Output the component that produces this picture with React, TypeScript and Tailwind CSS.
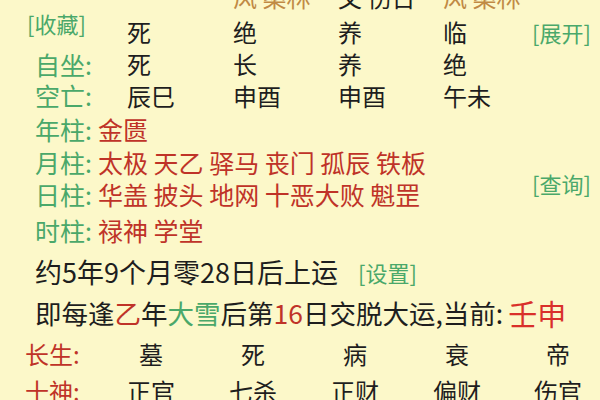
import React from "react";

const green = "text-[#4aa86a]";
const red = "text-[#bf3328]";

function Cells({ items, widths }: { items: string[]; widths: string[] }) {
  return (
    <>
      {items.map((t, i) => (
        <div key={i} className={`${widths[i]} shrink-0`}>
          {t}
        </div>
      ))}
    </>
  );
}

const topWidths = ["w-[106px]", "w-[105px]", "w-[105px]", "w-[89px]"];

function ShenshaRow({ label, items, className }: { label: string; items: string[]; className: string }) {
  return (
    <div className={`flex items-center whitespace-nowrap text-[25px] ${className}`}>
      <span className={green}>{label}</span>
      <span className={`ml-[6px] ${red}`}>{items.join(" ")}</span>
    </div>
  );
}

const bottomWidths = ["w-[102px]", "w-[102px]", "w-[102px]", "w-[102px]", "w-[100px]"];

function GridRow({ label, items, className }: { label: string; items: string[]; className: string }) {
  return (
    <div className={`flex items-center pl-[25px] text-[24px] ${className}`}>
      <div className={`w-[75px] shrink-0 ${red}`}>{label}</div>
      {items.map((t, i) => (
        <div key={i} className={`${bottomWidths[i]} shrink-0 text-center`}>
          {t}
        </div>
      ))}
    </div>
  );
}

export default function App() {
  return (
    <div
      className="w-[600px] h-[400px] overflow-hidden bg-[#fcf8c9] text-[#1e1e1e] leading-none"
      style={{ fontFamily: '"Noto Sans CJK SC", "Noto Sans", sans-serif' }}
    >
      {/* cut-off nayin row */}
      <div className="mt-[-21px] flex h-[36px] items-center pl-[35px] text-[24px] whitespace-nowrap">
        <div className="w-[92px] shrink-0" />
        <div className="w-[106px] shrink-0" />
        <div className="w-[105px] shrink-0 text-[#c08a45]">风 桑林</div>
        <div className="w-[105px] shrink-0">文 伤日</div>
        <div className="w-[89px] shrink-0 text-[#c08a45]">风 桑林</div>
      </div>

      {/* row 1 */}
      <div className="flex h-[34px] items-center pl-[35px] text-[24px]">
        <div className="w-[92px] shrink-0 self-start">
          <span className={`-ml-[8px] -mt-[2px] block text-[22px] leading-[20px] ${green}`}>[收藏]</span>
        </div>
        <Cells items={["死", "绝", "养", "临"]} widths={topWidths} />
        <div className={`text-[22px] ${green}`}>[展开]</div>
      </div>

      <div className="flex h-[30px] items-center pl-[35px] text-[24px]">
        <div className={`w-[92px] shrink-0 text-[25px] ${green}`}>自坐:</div>
        <Cells items={["死", "长", "养", "绝"]} widths={topWidths} />
      </div>

      <div className="flex h-[33px] items-center pl-[35px] text-[24px]">
        <div className={`w-[92px] shrink-0 text-[25px] ${green}`}>空亡:</div>
        <Cells items={["辰巳", "申酉", "申酉", "午未"]} widths={topWidths} />
      </div>

      {/* shensha */}
      <div className="pl-[35px]">
        <ShenshaRow label="年柱:" items={["金匮"]} className="h-[34px]" />
        <div className="flex">
          <div className="w-[497px] shrink-0">
            <ShenshaRow label="月柱:" items={["太极", "天乙", "驿马", "丧门", "孤辰", "铁板"]} className="h-[32px]" />
            <ShenshaRow label="日柱:" items={["华盖", "披头", "地网", "十恶大败", "魁罡"]} className="h-[32px]" />
          </div>
          <div className={`flex items-center pt-[10px] text-[22px] ${green}`}>[查询]</div>
        </div>
        <ShenshaRow label="时柱:" items={["禄神", "学堂"]} className="h-[40px]" />
      </div>

      {/* dayun */}
      <div className="flex h-[43px] items-center pl-[35px] text-[27px] whitespace-nowrap">
        <span>约5年9个月零28日后上运</span>
        <span className={`ml-[20px] text-[22px] ${green}`}>[设置]</span>
      </div>
      <div className="flex h-[41px] items-center pl-[35px] text-[26.5px] whitespace-nowrap">
        <span>即每逢</span>
        <span className={red}>乙</span>
        <span>年</span>
        <span className={green}>大雪</span>
        <span>后第</span>
        <span className={red}>16</span>
        <span>日交脱大运,当前:</span>
        <span className="ml-[5px] text-[29px] text-[#d9302a]">壬申</span>
      </div>

      <GridRow label="长生:" items={["墓", "死", "病", "衰", "帝"]} className="h-[40px]" />
      <GridRow label="十神:" items={["正官", "七杀", "正财", "偏财", "伤官"]} className="h-[34px]" />
    </div>
  );
}
